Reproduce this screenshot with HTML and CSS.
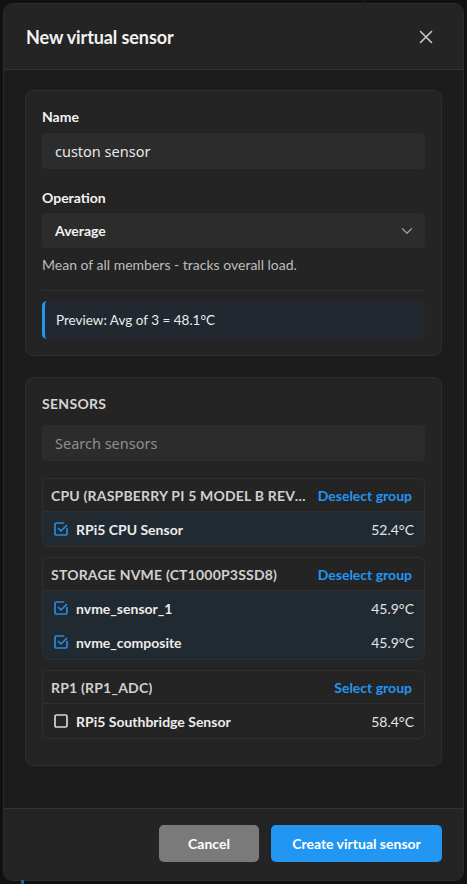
FILE: index.html
```html
<!DOCTYPE html>
<html lang="en">
<head>
    <meta charset="UTF-8" />
    <meta name="viewport" content="width=device-width, initial-scale=1.0" />
    <title>New virtual sensor</title>
    <link rel="stylesheet" href="styles.css">
</head>
<body>
<div class="backdrop-line top"></div>
<div class="backdrop-line bottom"></div>

<div class="dialog">
    <header class="dialog-header">
        <h2>New virtual sensor</h2>
        <button class="close-btn" aria-label="Close">
            <svg width="14" height="14" viewBox="0 0 14 14" fill="none" stroke="currentColor" stroke-width="1.6" stroke-linecap="round">
                <path d="M1.5 1.5l11 11M12.5 1.5l-11 11" />
            </svg>
        </button>
    </header>

    <div class="dialog-body">
        <section class="card">
            <label class="field-label">Name</label>
            <div class="input">custon sensor</div>

            <label class="field-label spaced">Operation</label>
            <div class="select">
                <span>Average</span>
                <svg width="12" height="8" viewBox="0 0 12 8" fill="none" stroke="currentColor" stroke-width="1.4" stroke-linecap="round" stroke-linejoin="round">
                    <path d="M1.5 1.8l4.5 4.4 4.5-4.4" />
                </svg>
            </div>
            <p class="hint">Mean of all members - tracks overall load.</p>

            <div class="divider"></div>

            <div class="preview">Preview: Avg of 3 = 48.1°C</div>
        </section>

        <section class="card sensors">
            <h3 class="section-title">Sensors</h3>
            <div class="input placeholder">Search sensors</div>

            <div class="group">
                <div class="group-head">
                    <span class="group-name">CPU (Raspberry Pi 5 Model B Rev 1.0)</span>
                    <a class="group-action">Deselect group</a>
                </div>
                <div class="row checked">
                    <svg class="check" width="16" height="16" viewBox="0 0 16 16" fill="none" stroke="currentColor" stroke-width="1.7" stroke-linecap="round" stroke-linejoin="round">
                        <path d="M14 7.5V12.5a1.5 1.5 0 0 1-1.5 1.5h-9A1.5 1.5 0 0 1 2 12.5v-9A1.5 1.5 0 0 1 3.5 2h7" />
                        <path d="M5.5 7.5l2.5 2.5 5.5-5.5" />
                    </svg>
                    <span class="row-name">RPi5 CPU Sensor</span>
                    <span class="row-value">52.4°C</span>
                </div>
            </div>

            <div class="group">
                <div class="group-head">
                    <span class="group-name">Storage NVMe (CT1000P3SSD8)</span>
                    <a class="group-action">Deselect group</a>
                </div>
                <div class="row checked">
                    <svg class="check" width="16" height="16" viewBox="0 0 16 16" fill="none" stroke="currentColor" stroke-width="1.7" stroke-linecap="round" stroke-linejoin="round">
                        <path d="M14 7.5V12.5a1.5 1.5 0 0 1-1.5 1.5h-9A1.5 1.5 0 0 1 2 12.5v-9A1.5 1.5 0 0 1 3.5 2h7" />
                        <path d="M5.5 7.5l2.5 2.5 5.5-5.5" />
                    </svg>
                    <span class="row-name">nvme_sensor_1</span>
                    <span class="row-value">45.9°C</span>
                </div>
                <div class="row checked">
                    <svg class="check" width="16" height="16" viewBox="0 0 16 16" fill="none" stroke="currentColor" stroke-width="1.7" stroke-linecap="round" stroke-linejoin="round">
                        <path d="M14 7.5V12.5a1.5 1.5 0 0 1-1.5 1.5h-9A1.5 1.5 0 0 1 2 12.5v-9A1.5 1.5 0 0 1 3.5 2h7" />
                        <path d="M5.5 7.5l2.5 2.5 5.5-5.5" />
                    </svg>
                    <span class="row-name">nvme_composite</span>
                    <span class="row-value">45.9°C</span>
                </div>
            </div>

            <div class="group">
                <div class="group-head">
                    <span class="group-name">RP1 (rp1_adc)</span>
                    <a class="group-action">Select group</a>
                </div>
                <div class="row">
                    <svg class="check" width="16" height="16" viewBox="0 0 16 16" fill="none" stroke="currentColor" stroke-width="1.7">
                        <rect x="2" y="2" width="12" height="12" rx="1.5" />
                    </svg>
                    <span class="row-name">RPi5 Southbridge Sensor</span>
                    <span class="row-value">58.4°C</span>
                </div>
            </div>
        </section>
    </div>

    <footer class="dialog-footer">
        <button class="btn btn-cancel">Cancel</button>
        <button class="btn btn-primary">Create virtual sensor</button>
    </footer>
</div>
</body>
</html>
```

FILE: styles.css
```css
:root {
    --blue: #2196f3;
    --text: #f2f2f2;
    --muted: #c4c4c4;
    --line: #333333;
    --card: #242424;
    --field: #2c2c2c;
}

* {
    box-sizing: border-box;
    margin: 0;
    padding: 0;
}

body {
    font-family: 'Lato', 'Noto Sans', sans-serif;
    background: #101112;
    color: var(--text);
    height: 884px;
    padding: 4px;
    overflow: hidden;
    position: relative;
}

/* bits of the page behind the modal */
.backdrop-line {
    position: absolute;
}

.backdrop-line.top {
    top: 0;
    left: 363px;
    width: 1px;
    height: 4px;
    background: #1e1e1e;
}

.backdrop-line.bottom {
    bottom: 0;
    left: 21px;
    width: 3px;
    height: 4px;
    background: #1d5f96;
}

.dialog {
    height: 876px;
    background: #1c1c1c;
    border-radius: 8px;
    overflow: hidden;
    display: flex;
    flex-direction: column;
    box-shadow: 0 0 0 1px #2a2a2a;
}

.dialog-header {
    height: 66px;
    flex-shrink: 0;
    background: #242424;
    border-bottom: 1px solid var(--line);
    display: flex;
    align-items: center;
    justify-content: space-between;
    padding: 0 30px 0 22px;
}

.dialog-header h2 {
    font-size: 18px;
    font-weight: 700;
    letter-spacing: -0.1px;
}

.close-btn {
    background: none;
    border: none;
    color: #c8c8c8;
    display: flex;
}

.dialog-body {
    flex: 1;
    padding: 20px 21px;
    display: flex;
    flex-direction: column;
    gap: 21px;
}

.card {
    background: var(--card);
    border: 1px solid #2e2e2e;
    border-radius: 8px;
    padding: 16px 16px 16px;
    display: flex;
    flex-direction: column;
}

.field-label {
    font-size: 14px;
    font-weight: 700;
    line-height: 20px;
    margin-bottom: 6px;
}

.field-label.spaced {
    margin-top: 19px;
    margin-bottom: 5px;
}

.input {
    height: 36px;
    background: var(--field);
    border-radius: 4px;
    padding: 0 13px;
    display: flex;
    align-items: center;
    font-family: 'Noto Sans', sans-serif;
    font-size: 14.5px;
    color: #e8e8e8;
}

.input.placeholder {
    color: #8f8f8f;
}

.select {
    height: 35px;
    background: var(--field);
    border-radius: 4px;
    padding: 0 12px 0 13px;
    display: flex;
    align-items: center;
    justify-content: space-between;
    font-size: 14px;
    font-weight: 700;
}

.select svg {
    color: #9a9a9a;
}

.hint {
    margin-top: 8px;
    font-size: 14px;
    line-height: 18px;
    color: #bdbdbd;
}

.divider {
    height: 1px;
    background: #303030;
    margin: 16px 0 10px;
}

.preview {
    height: 38px;
    background: #212830;
    border-left: 3px solid var(--blue);
    border-radius: 5px;
    padding-left: 11px;
    display: flex;
    align-items: center;
    font-size: 13.5px;
    color: #ececec;
}

.sensors {
    padding-bottom: 26px;
}

.section-title {
    font-size: 14px;
    font-weight: 700;
    line-height: 20px;
    text-transform: uppercase;
    letter-spacing: 0.3px;
    color: #d4d4d4;
    margin-bottom: 11px;
}

.sensors .input {
    margin-bottom: 17px;
}

.group {
    border: 1px solid #2f2f2f;
    border-radius: 6px;
    overflow: hidden;
    margin-bottom: 10px;
}

.group:last-child {
    margin-bottom: 0;
}

.group-head {
    height: 33px;
    border-bottom: 1px solid #2f2f2f;
    display: flex;
    align-items: center;
    justify-content: space-between;
    gap: 12px;
    padding: 0 12px 0 8px;
    font-size: 14px;
    font-weight: 700;
}

.group-name {
    text-transform: uppercase;
    color: #d0d0d0;
    letter-spacing: 0.2px;
    white-space: nowrap;
    overflow: hidden;
    text-overflow: ellipsis;
}

.group-action {
    color: var(--blue);
    white-space: nowrap;
    flex-shrink: 0;
}

.row {
    height: 34px;
    display: flex;
    align-items: center;
    padding: 0 10px 0 10px;
    font-size: 14px;
}

.row.checked {
    background: #212a31;
}

.check {
    color: #d6d6d6;
    margin-right: 7px;
    flex-shrink: 0;
}

.row.checked .check {
    color: #2a8ae0;
}

.row-name {
    flex: 1;
    font-weight: 700;
    color: #ececec;
}

.row-value {
    color: #e4e4e4;
}

.dialog-footer {
    height: 72px;
    flex-shrink: 0;
    background: #242424;
    border-top: 1px solid var(--line);
    display: flex;
    justify-content: flex-end;
    align-items: center;
    gap: 12px;
    padding: 0 21px 2px;
}

.btn {
    height: 37px;
    border: none;
    border-radius: 5px;
    padding: 0 20px;
    font-family: 'Lato', sans-serif;
    font-size: 14px;
    font-weight: 700;
    color: #ffffff;
}

.btn-cancel {
    min-width: 100px;
    background: #7a7a7a;
}

.btn-primary {
    min-width: 171px;
    background: var(--blue);
}
```
